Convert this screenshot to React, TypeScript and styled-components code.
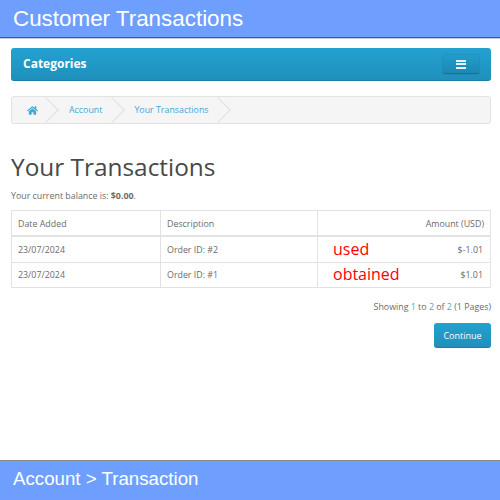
import React from "react";
import styled, { createGlobalStyle } from "styled-components";
import { FaHome } from "react-icons/fa";

const GlobalStyle = createGlobalStyle`
  html, body {
    margin: 0;
    padding: 0;
    background: #fff;
  }
  body {
    font-family: "Open Sans", sans-serif;
    font-size: 8.85px;
    color: #6b6b6b;
  }
`;

const rows = [
  { date: "23/07/2024", description: "Order ID: #2", note: "used", amount: "$-1.01" },
  { date: "23/07/2024", description: "Order ID: #1", note: "obtained", amount: "$1.01" },
];

const App = () => {
  return (
    <Page>
      <GlobalStyle />
      <Banner>Customer Transactions</Banner>
      <Content>
        <Navbar>
          <NavTitle>Categories</NavTitle>
          <MenuButton aria-label="menu">
            <MenuBar />
            <MenuBar />
            <MenuBar />
          </MenuButton>
        </Navbar>
        <Breadcrumb>
          <Crumb>
            <FaHome size={11} />
          </Crumb>
          <Crumb>Account</Crumb>
          <Crumb>Your Transactions</Crumb>
        </Breadcrumb>
        <Title>Your Transactions</Title>
        <Balance>
          Your current balance is: <b>$0.00</b>.
        </Balance>
        <Table>
          <thead>
            <tr>
              <Th>Date Added</Th>
              <Th>Description</Th>
              <Th $right>Amount (USD)</Th>
            </tr>
          </thead>
          <tbody>
            {rows.map((row, i) => (
              <tr key={row.description}>
                <Td $tall={i === 0}>{row.date}</Td>
                <Td $tall={i === 0}>{row.description}</Td>
                <Td $tall={i === 0}>
                  <AmountCell>
                    <Note>{row.note}</Note>
                    {row.amount}
                  </AmountCell>
                </Td>
              </tr>
            ))}
          </tbody>
        </Table>
        <Showing>
          Showing <Num>1</Num> to <Num>2</Num> of <Num>2</Num> (1 Pages)
        </Showing>
        <Actions>
          <ContinueButton>Continue</ContinueButton>
        </Actions>
      </Content>
      <Footer>Account &gt; Transaction</Footer>
    </Page>
  );
};

export default App;

const Page = styled.div`
  width: 500px;
  height: 500px;
  display: flex;
  flex-direction: column;
  overflow: hidden;
`;

const Banner = styled.div`
  height: 38px;
  flex-shrink: 0;
  box-sizing: border-box;
  padding-left: 13px;
  background: #6e9fff;
  border-bottom: 1px solid #3f5a96;
  box-shadow: 0 1px 0 #c4c8d4;
  color: #fff;
  font-family: "Liberation Sans", Arial, sans-serif;
  font-size: 22.4px;
  line-height: 38px;
`;

const Content = styled.div`
  flex: 1;
  padding: 10px 9px 0 11px;
`;

const Navbar = styled.div`
  height: 33px;
  box-sizing: border-box;
  display: flex;
  align-items: center;
  justify-content: space-between;
  padding: 0 12px 0 12px;
  border-radius: 3px;
  border-bottom: 1px solid #1f7ca5;
  background: linear-gradient(to bottom, #23a1d1, #1f90bb);
`;

const NavTitle = styled.div`
  color: #fff;
  font-size: 12px;
  font-weight: 700;
  margin-bottom: 2px;
`;

const MenuButton = styled.button`
  width: 36px;
  height: 19px;
  margin-top: 1px;
  box-sizing: border-box;
  padding: 0;
  display: flex;
  flex-direction: column;
  align-items: center;
  justify-content: center;
  gap: 1.5px;
  border: none;
  border-bottom: 1px solid #1a7396;
  border-radius: 2px;
  background: linear-gradient(to bottom, #229ccb, #1d88b3);
  box-shadow: 0 0 0 1px rgba(30, 125, 165, 0.35);
`;

const MenuBar = styled.span`
  width: 10px;
  height: 2px;
  background: #e8f3f8;
`;

const Breadcrumb = styled.div`
  margin-top: 15px;
  height: 28px;
  box-sizing: border-box;
  display: flex;
  align-items: center;
  overflow: hidden;
  border: 1px solid #e2e2e2;
  border-radius: 3px;
  background: #f5f5f5;
`;

const Crumb = styled.div`
  position: relative;
  height: 100%;
  display: flex;
  align-items: center;
  padding: 0 10px 0 23px;
  color: #3fa9d4;

  &:first-child {
    padding: 0 8px 0 15px;
  }

  &:last-child {
    padding-left: 22px;
  }

  /* the chevron between two items is a rotated square with two borders */
  &::after {
    content: "";
    position: absolute;
    top: 3.8px;
    right: -9.2px;
    width: 18.4px;
    height: 18.4px;
    box-sizing: border-box;
    border-top: 1px solid #e0e0e0;
    border-right: 1px solid #e0e0e0;
    transform: rotate(45deg);
  }
`;

const Title = styled.h1`
  margin: 26px 0 0;
  color: #484848;
  font-size: 24.4px;
  font-weight: 400;
  line-height: 33px;
`;

const Balance = styled.p`
  margin: 6px 0 0;
  line-height: 14px;
`;

const Table = styled.table`
  margin-top: 7px;
  width: 480px;
  border-collapse: collapse;
  table-layout: fixed;
  border: 1px solid #e2e2e2;
`;

const Th = styled.td<{ $right?: boolean }>`
  height: 23px;
  padding: 1px 6px 0;
  border: 1px solid #e2e2e2;
  border-bottom-width: 2px;
  text-align: ${({ $right }) => ($right ? "right" : "left")};

  &:nth-child(1) {
    width: 136px;
  }
  &:nth-child(2) {
    width: 144px;
  }
`;

const Td = styled.td<{ $tall?: boolean }>`
  height: 24px;
  padding: ${({ $tall }) => ($tall ? "1px" : "0")} 6px 0;
  border: 1px solid #e2e2e2;
`;

const AmountCell = styled.div`
  display: flex;
  align-items: center;
  justify-content: space-between;
  padding: 0 1px 0 9px;
`;

const Note = styled.span`
  margin-bottom: 3px;
  color: #f00;
  font-size: 16px;
  line-height: 18px;
`;

const Showing = styled.div`
  margin-top: 12px;
  line-height: 14px;
  text-align: right;
`;

const Num = styled.span`
  color: #3fa9d4;
`;

const Actions = styled.div`
  margin-top: 9px;
  display: flex;
  justify-content: flex-end;
`;

const ContinueButton = styled.button`
  width: 57px;
  height: 25px;
  padding: 0;
  border: none;
  border-bottom: 1px solid #1f7ca5;
  border-radius: 3px;
  background: linear-gradient(to bottom, #23a1d1, #1f90bb);
  color: #fff;
  font-family: "Open Sans", sans-serif;
  font-size: 9px;
`;

const Footer = styled.div`
  height: 40px;
  flex-shrink: 0;
  box-sizing: border-box;
  padding-left: 13px;
  background: #6e9fff;
  border-top: 1px solid #8a8a8a;
  color: #fff;
  font-family: "Liberation Sans", Arial, sans-serif;
  font-size: 18.7px;
  line-height: 36px;
`;
